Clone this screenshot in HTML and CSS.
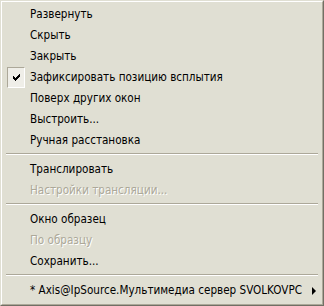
FILE: index.html
```html
<!DOCTYPE html>
<html lang="ru">
<head>
    <meta charset="UTF-8">
    <title>Меню</title>
    <link rel="stylesheet" href="styles.css">
</head>
<body>
    <div class="menu">
        <ul class="list">
            <li class="item">Развернуть</li>
            <li class="item">Скрыть</li>
            <li class="item">Закрыть</li>
            <li class="item checked">
                <span class="checkbox">
                    <svg width="7" height="7" viewBox="0 0 7 7" shape-rendering="crispEdges">
                        <path d="M0 2h1v3h-1zM1 3h1v3h-1zM2 4h1v3h-1zM3 3h1v3h-1zM4 2h1v3h-1zM5 1h1v3h-1zM6 0h1v3h-1z" fill="#000"/>
                    </svg>
                </span>
                Зафиксировать позицию всплытия
            </li>
            <li class="item">Поверх других окон</li>
            <li class="item">Выстроить...</li>
            <li class="item">Ручная расстановка</li>
            <li class="sep"></li>
            <li class="item">Транслировать</li>
            <li class="item disabled">Настройки трансляции...</li>
            <li class="sep"></li>
            <li class="item">Окно образец</li>
            <li class="item disabled">По образцу</li>
            <li class="item">Сохранить...</li>
            <li class="sep"></li>
            <li class="item sub">* Axis@IpSource.Мультимедиа сервер SVOLKOVPC
                <span class="arrow"></span>
            </li>
        </ul>
    </div>
</body>
</html>
```

FILE: styles.css
```css
html, body {
    margin: 0;
    padding: 0;
    background: #e0dfd3;
}

.menu {
    width: 324px;
    height: 306px;
    box-sizing: border-box;
    border: 1px solid;
    border-color: #e0dfd3 #716f64 #716f64 #e0dfd3;
    background: #e0dfd3;
}

.list {
    list-style: none;
    margin: 0;
    height: 100%;
    box-sizing: border-box;
    padding: 2px 2px 3px 2px;
    border: 1px solid;
    border-color: #ffffff #aca899 #aca899 #ffffff;
    font-family: "DejaVu Sans Condensed", "DejaVu Sans", sans-serif;
    font-size: 11.6px;
    color: #000;
}

.item {
    position: relative;
    height: 21px;
    line-height: 21px;
    padding-left: 26px;
    white-space: nowrap;
}

.disabled {
    color: #aca899;
    text-shadow: 1px 1px 0 #ffffff;
}

.checkbox {
    position: absolute;
    left: 3px;
    top: 0;
    width: 18px;
    height: 21px;
    box-sizing: border-box;
    border: 1px solid;
    border-color: #aca899 #ffffff #ffffff #aca899;
    background: #efeee8;
    display: flex;
    align-items: center;
    justify-content: center;
}

.checkbox svg {
    display: block;
}

.sep {
    height: 8px;
    margin: 0 2px;
    position: relative;
}

.sep::before {
    content: "";
    position: absolute;
    left: 0;
    right: 0;
    top: 2px;
    border-top: 1px solid #aca899;
    border-bottom: 1px solid #ffffff;
}

.arrow {
    position: absolute;
    right: 4px;
    top: 7px;
    width: 0;
    height: 0;
    border-top: 4px solid transparent;
    border-bottom: 4px solid transparent;
    border-left: 4px solid #000;
}
```
